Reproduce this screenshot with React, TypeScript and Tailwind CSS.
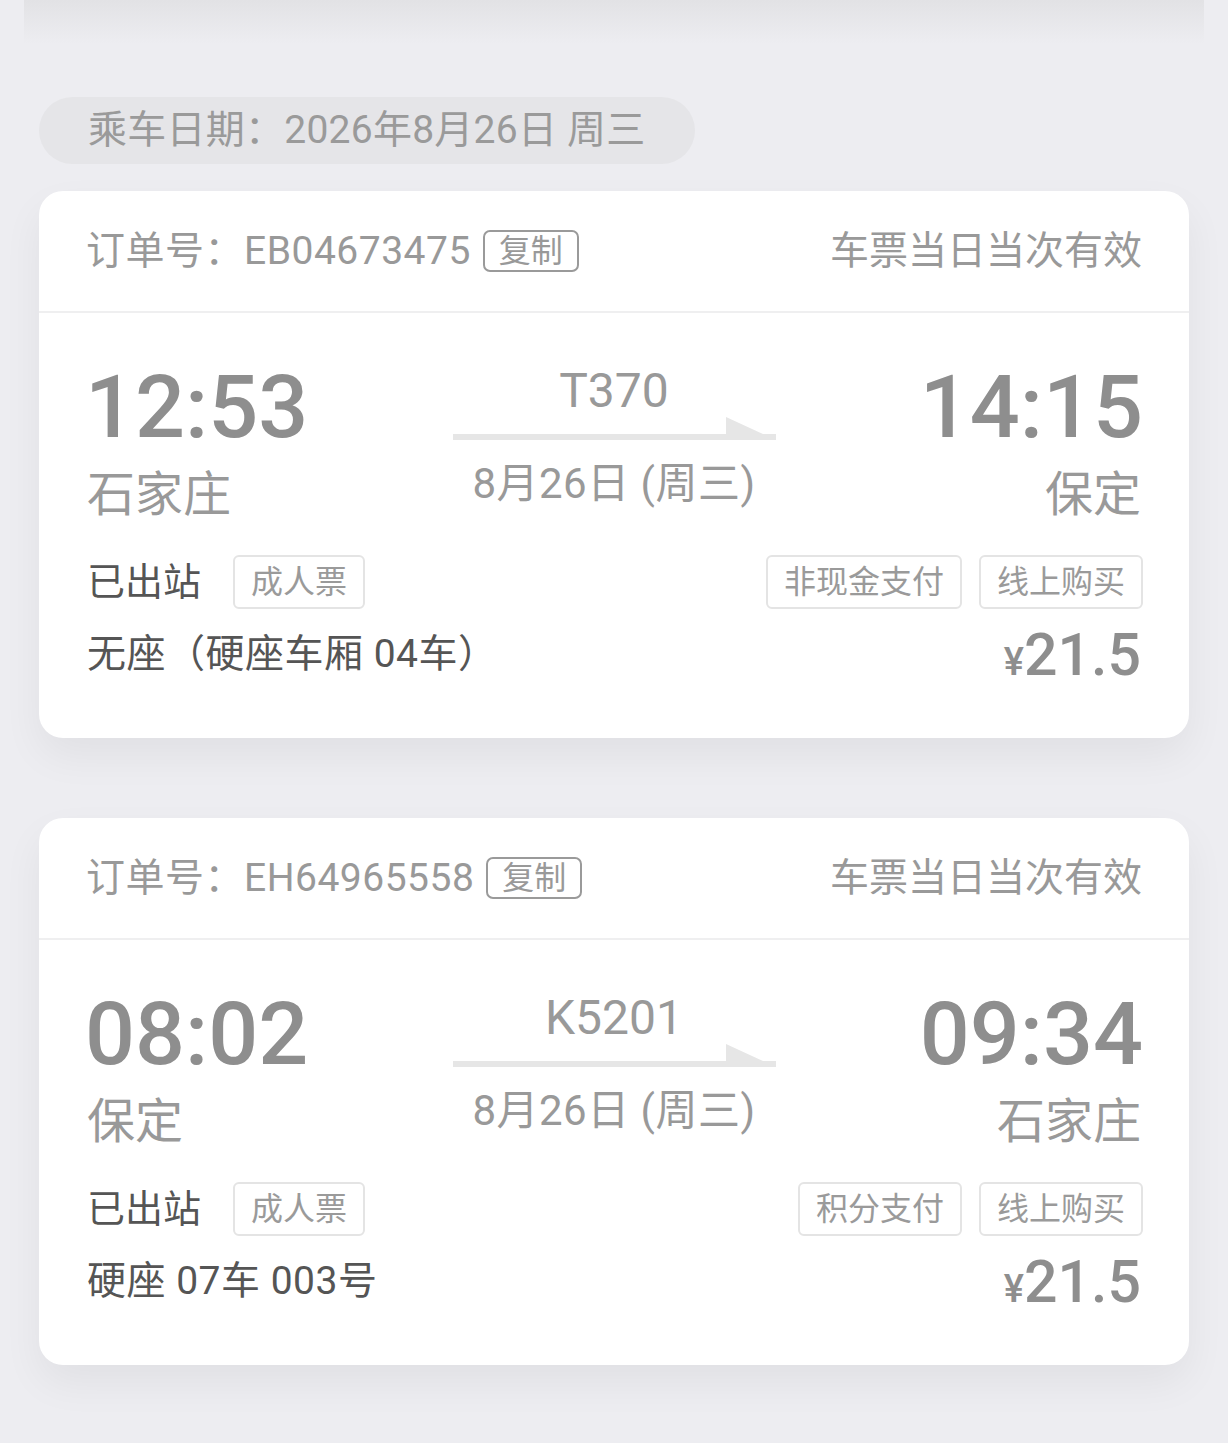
import React from "react";

const FONT = { fontFamily: "Roboto, 'Noto Sans CJK SC', sans-serif" };

type Ticket = {
  order: string;
  depTime: string;
  depStation: string;
  arrTime: string;
  arrStation: string;
  train: string;
  date: string;
  payTag: string;
  seat: string;
  price: string;
};

const tickets: Ticket[] = [
  {
    order: "EB04673475",
    depTime: "12:53",
    depStation: "石家庄",
    arrTime: "14:15",
    arrStation: "保定",
    train: "T370",
    date: "8月26日 (周三)",
    payTag: "非现金支付",
    seat: "无座（硬座车厢 04车）",
    price: "21.5",
  },
  {
    order: "EH64965558",
    depTime: "08:02",
    depStation: "保定",
    arrTime: "09:34",
    arrStation: "石家庄",
    train: "K5201",
    date: "8月26日 (周三)",
    payTag: "积分支付",
    seat: "硬座 07车 003号",
    price: "21.5",
  },
];

function Arrow() {
  return (
    <svg width="323" height="23" viewBox="0 0 323 23" className="block">
      <rect x="0" y="17" width="323" height="6" fill="#e6e6e6" />
      <polygon points="273,0 323,23 273,23" fill="#e6e6e6" />
    </svg>
  );
}

function Tag({ children }: { children: React.ReactNode }) {
  return (
    <div className="h-[54px] flex items-center px-[16px] border-2 border-[#e4e4e4] rounded-[6px] text-[32px] leading-none text-[#9a9a9a]">
      {children}
    </div>
  );
}

function Card({ t }: { t: Ticket }) {
  return (
    <div className="bg-white rounded-[24px] shadow-[0_18px_40px_rgba(0,0,0,0.055)]">
      <div className="h-[120px] pl-[47px] pr-[47px] flex items-center justify-between">
        <div className="flex items-center">
          <span className="text-[39px] leading-none text-[#999999] tracking-[0.5px]">订单号：{t.order}</span>
          <span className="ml-[12px] h-[42px] px-[14px] flex items-center border-2 border-[#9a9a9a] rounded-[7px] text-[32px] leading-none text-[#999999]">
            复制
          </span>
        </div>
        <span className="text-[39px] leading-none text-[#999999]">车票当日当次有效</span>
      </div>
      <div className="h-[2px] bg-[#efeff0]" />
      <div className="px-[48px] pt-[50px] pb-[55px]">
        <div className="grid grid-cols-[1fr_323px_1fr]">
          <div className="flex flex-col items-start">
            <div className="h-[88px] text-[88px] leading-[88px] font-medium text-[#8e8e8e] -ml-[2px]">{t.depTime}</div>
            <div className="mt-[16px] h-[56px] text-[48px] leading-[56px] text-[#999999]">{t.depStation}</div>
          </div>
          <div className="flex flex-col items-center">
            <div className="h-[56px] text-[48px] leading-[56px] text-[#999999]">{t.train}</div>
            <div className="mt-[-2px]">
              <Arrow />
            </div>
            <div className="mt-[20px] h-[48px] text-[42px] leading-[48px] text-[#999999] tracking-[0.5px] whitespace-nowrap">{t.date}</div>
          </div>
          <div className="flex flex-col items-end">
            <div className="h-[88px] text-[88px] leading-[88px] font-medium text-[#8e8e8e] -mr-[2px]">{t.arrTime}</div>
            <div className="mt-[16px] h-[56px] text-[48px] leading-[56px] text-[#999999]">{t.arrStation}</div>
          </div>
        </div>
        <div className="mt-[32px] flex items-center justify-between">
          <div className="flex items-center gap-[32px]">
            <span className="text-[38px] leading-none text-[#555555]">已出站</span>
            <Tag>成人票</Tag>
          </div>
          <div className="flex items-center gap-[17px] -mr-[2px]">
            <Tag>{t.payTag}</Tag>
            <Tag>线上购买</Tag>
          </div>
        </div>
        <div className="mt-[16px] h-[58px] flex items-center justify-between">
          <span className="text-[39px] leading-none text-[#555555] tracking-[0.5px]">{t.seat}</span>
          <span className="flex items-baseline text-[#8e8e8e] font-medium">
            <span className="text-[38px] leading-none">¥</span>
            <span className="text-[59px] leading-none">{t.price}</span>
          </span>
        </div>
      </div>
    </div>
  );
}

export default function App() {
  return (
    <div style={FONT} className="w-[1228px] min-h-[1443px] bg-[#ededf1] overflow-hidden">
      <div className="h-[44px] mx-[24px] bg-gradient-to-b from-[#e2e2e5] to-[#ededf1]" />
      <div className="px-[39px]">
        <div className="mt-[53px] inline-flex items-center h-[67px] px-[49px] rounded-full bg-[#e5e5e8]">
          <span className="text-[39px] leading-none text-[#9a9a9a] tracking-[0.25px]">乘车日期：2026年8月26日 周三</span>
        </div>
        <div className="mt-[27px] flex flex-col gap-[80px]">
          {tickets.map((t) => (
            <Card key={t.order} t={t} />
          ))}
        </div>
      </div>
    </div>
  );
}
